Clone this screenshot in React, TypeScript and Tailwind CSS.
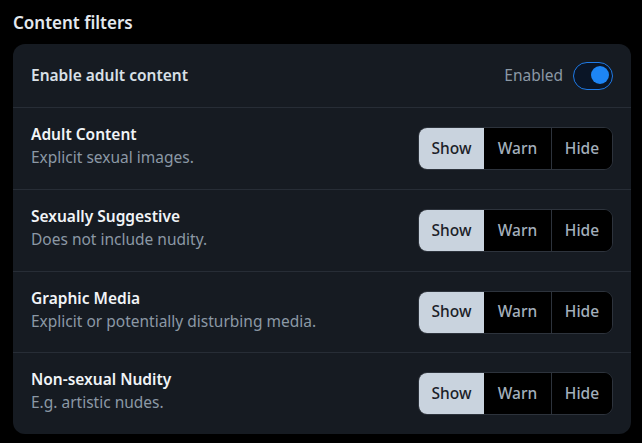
import { useState } from "react";

type Level = "Show" | "Warn" | "Hide";

const filters = [
  { id: "adult", label: "Adult Content", description: "Explicit sexual images.", h: "h-[82px]" },
  { id: "suggestive", label: "Sexually Suggestive", description: "Does not include nudity.", h: "h-[82px]" },
  { id: "graphic", label: "Graphic Media", description: "Explicit or potentially disturbing media.", h: "h-[81px]" },
  { id: "nudity", label: "Non-sexual Nudity", description: "E.g. artistic nudes.", h: "h-[81px]" },
];

const levels: Level[] = ["Show", "Warn", "Hide"];

function Segmented({ value, onChange }: { value: Level; onChange: (v: Level) => void }) {
  return (
    <div className="flex h-[43px] rounded-[9px] border border-[#2d333c] overflow-hidden bg-black">
      {levels.map((level, i) => {
        const active = value === level;
        return (
          <button
            key={level}
            onClick={() => onChange(level)}
            className={`h-full text-[15.5px] font-medium ${
              i === 0 ? "w-[65px]" : i === 1 ? "w-[67px]" : "w-[61px]"
            } ${i === 2 ? "border-l border-[#2d333c]" : ""} ${
              active ? "bg-[#c9d3de] text-[#1b2128]" : "bg-black text-[#a3afbb]"
            }`}
          >
            {level}
          </button>
        );
      })}
    </div>
  );
}

export default function App() {
  const [enabled, setEnabled] = useState(true);
  const [values, setValues] = useState<Record<string, Level>>({
    adult: "Show",
    suggestive: "Show",
    graphic: "Show",
    nudity: "Show",
  });

  return (
    <div
      className="min-h-screen bg-black px-[13px] pt-[10px]"
      style={{ fontFamily: '"Noto Sans", "Open Sans", sans-serif' }}
    >
      <h2 className="text-[17px] font-semibold text-[#e3e8ee] leading-[26px]">Content filters</h2>

      <div className="mt-[8px] w-[618px] rounded-[12px] bg-[#161b22]">
        {/* Enable toggle */}
        <div className="flex items-center justify-between h-[64px] px-[18px] border-b border-[#272d36]">
          <span className="text-[15.5px] font-semibold text-[#d9e0e7]">Enable adult content</span>
          <div className="flex items-center gap-[10px]">
            <span className="text-[15.5px] text-[#8b98a5]">{enabled ? "Enabled" : "Disabled"}</span>
            <button
              onClick={() => setEnabled(!enabled)}
              className="relative w-[40px] h-[28px] rounded-full border-[1.5px] border-[#1f7ae6] bg-[#0a1526]"
            >
              <span
                className={`absolute top-[3.5px] w-[18px] h-[18px] rounded-full bg-[#1d85f5] ${
                  enabled ? "right-[3.5px]" : "left-[3.5px]"
                }`}
              />
            </button>
          </div>
        </div>

        {filters.map((f, i) => (
          <div
            key={f.id}
            className={`flex items-center justify-between ${f.h} px-[18px] ${
              i < filters.length - 1 ? "border-b border-[#272d36]" : ""
            }`}
          >
            <div className="flex flex-col pb-[5px]">
              <span className="text-[15.5px] font-semibold text-[#f1f4f7] leading-[23px]">{f.label}</span>
              <span className="text-[15.5px] text-[#8b98a5] leading-[23px]">{f.description}</span>
            </div>
            <Segmented
              value={values[f.id]}
              onChange={(v) => setValues({ ...values, [f.id]: v })}
            />
          </div>
        ))}
      </div>
    </div>
  );
}
